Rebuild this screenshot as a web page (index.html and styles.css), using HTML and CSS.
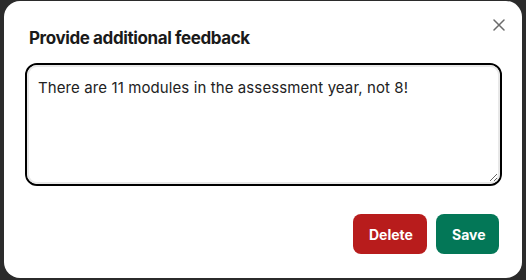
FILE: index.html
```html
<!DOCTYPE html>
<html>
<head>
<meta charset="utf-8">
<link rel="stylesheet" href="styles.css">
</head>
<body>
<div class="backdrop">
  <div class="modal">
    <div class="header">
      <h2 class="title">Provide additional feedback</h2>
      <button class="close" aria-label="Close">
        <svg width="12" height="12" viewBox="0 0 12 12"><path d="M1 1L11 11M11 1L1 11" stroke="#6b6b6b" stroke-width="1.5" stroke-linecap="round"/></svg>
      </button>
    </div>
    <div class="field">
      <textarea class="input">There are 11 modules in the assessment year, not 8!</textarea>
    </div>
    <div class="actions">
      <button class="btn btn-delete">Delete</button>
      <button class="btn btn-save">Save</button>
    </div>
  </div>
</div>
</body>
</html>
```
FILE: styles.css
```css
* { box-sizing: border-box; }
html, body { margin: 0; padding: 0; }
body {
  background: #2b2b2b;
  width: 526px;
  height: 280px;
  overflow: hidden;
  font-family: Inter, "Liberation Sans", sans-serif;
}
.backdrop {
  padding: 1px 0 0 4px;
}
.modal {
  width: 518px;
  height: 277px;
  background: #ffffff;
  border-radius: 16px;
  padding: 0 20px 0 21px;
  display: flex;
  flex-direction: column;
}
.header {
  display: flex;
  align-items: flex-start;
  justify-content: space-between;
  height: 62px;
}
.title {
  margin: 26px 0 0 4px;
  font-size: 17px;
  line-height: 22px;
  font-weight: 700;
  color: #1a1a1a;
  letter-spacing: -0.4px;
}
.close {
  margin: 18px -3px 0 0;
  padding: 0;
  border: none;
  background: none;
  width: 12px;
  height: 12px;
  display: flex;
}
.field {
  width: 477px;
  height: 123px;
  border: 2px solid #000;
  border-radius: 12px;
  display: flex;
}
.input {
  flex: 1;
  border: 2px solid #e8e8e8;
  border-radius: 10px;
  padding: 10px 9px;
  font-family: Inter, "Liberation Sans", sans-serif;
  font-size: 15px;
  line-height: 22px;
  letter-spacing: 0.1px;
  color: #222;
  outline: none;
  resize: vertical;
}
.actions {
  display: flex;
  justify-content: flex-end;
  gap: 9px;
  margin-top: 28px;
  padding-right: 3px;
}
.btn {
  height: 40px;
  border: none;
  border-radius: 8px;
  color: #fff;
  font-family: Inter, "Liberation Sans", sans-serif;
  font-size: 14px;
  font-weight: 700;
  padding: 0 16px;
}
.btn-delete { background: #b81c1c; width: 74px; }
.btn-save { background: #037757; width: 63px; }
```
